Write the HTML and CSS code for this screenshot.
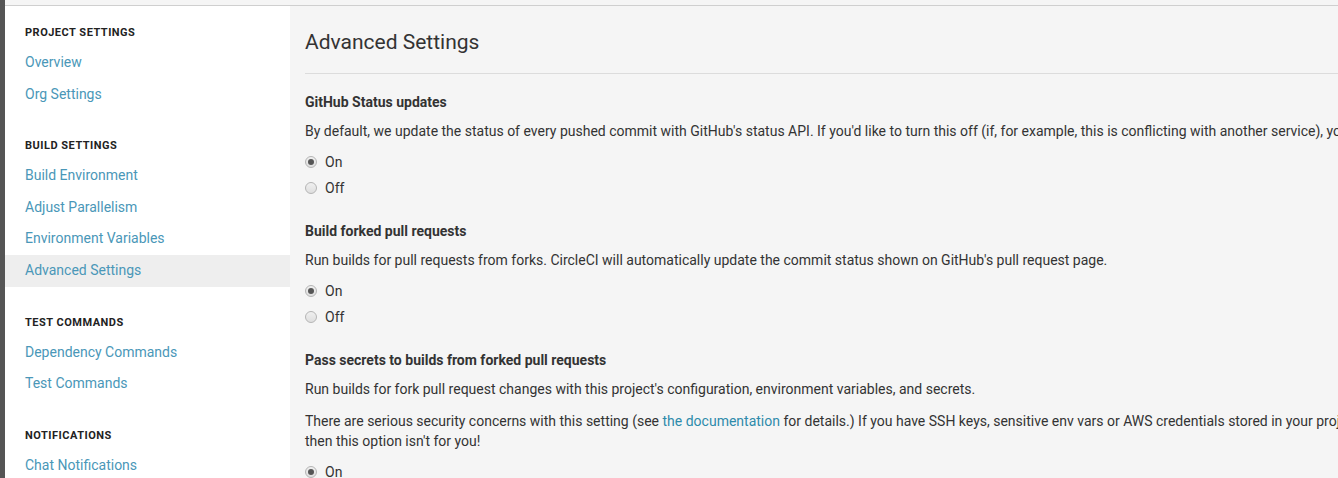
FILE: index.html
```html
<!DOCTYPE html>
<html>
<head>
<meta charset="utf-8">
<link rel="stylesheet" href="styles.css">
</head>
<body>
<div class="app">
  <div class="rail"></div>
  <div class="frame">
    <div class="topbar"></div>
    <div class="body">
      <nav class="sidebar">
        <div class="nav-section">
          <div class="nav-heading">Project Settings</div>
          <a class="nav-link" href="#">Overview</a>
          <a class="nav-link" href="#">Org Settings</a>
        </div>
        <div class="nav-section">
          <div class="nav-heading">Build Settings</div>
          <a class="nav-link" href="#">Build Environment</a>
          <a class="nav-link" href="#">Adjust Parallelism</a>
          <a class="nav-link" href="#">Environment Variables</a>
          <a class="nav-link active" href="#">Advanced Settings</a>
        </div>
        <div class="nav-section">
          <div class="nav-heading">Test Commands</div>
          <a class="nav-link" href="#">Dependency Commands</a>
          <a class="nav-link" href="#">Test Commands</a>
        </div>
        <div class="nav-section">
          <div class="nav-heading">Notifications</div>
          <a class="nav-link" href="#">Chat Notifications</a>
        </div>
      </nav>
      <main class="main">
        <div class="content">
          <h1 class="title">Advanced Settings</h1>
          <section class="setting">
            <h3 class="setting-title">GitHub Status updates</h3>
            <p>By default, we update the status of every pushed commit with GitHub's status API. If you'd like to turn this off (if, for example, this is conflicting with another service), you can do so below.</p>
            <div class="radios">
              <label class="radio"><input type="radio" name="s1" checked><span>On</span></label>
              <label class="radio"><input type="radio" name="s1"><span>Off</span></label>
            </div>
          </section>
          <section class="setting">
            <h3 class="setting-title">Build forked pull requests</h3>
            <p>Run builds for pull requests from forks. CircleCI will automatically update the commit status shown on GitHub's pull request page.</p>
            <div class="radios">
              <label class="radio"><input type="radio" name="s2" checked><span>On</span></label>
              <label class="radio"><input type="radio" name="s2"><span>Off</span></label>
            </div>
          </section>
          <section class="setting">
            <h3 class="setting-title">Pass secrets to builds from forked pull requests</h3>
            <p>Run builds for fork pull request changes with this project's configuration, environment variables, and secrets.</p>
            <p>There are serious security concerns with this setting (see <a href="#">the documentation</a> for details.) If you have SSH keys, sensitive env vars or AWS credentials stored in your project,<br>then this option isn't for you!</p>
            <div class="radios">
              <label class="radio"><input type="radio" name="s3" checked><span>On</span></label>
              <label class="radio"><input type="radio" name="s3"><span>Off</span></label>
            </div>
          </section>
        </div>
      </main>
    </div>
  </div>
</div>
</body>
</html>
```
FILE: styles.css
```css
html, body {
  margin: 0;
  padding: 0;
  height: 100%;
  overflow: hidden;
}
body {
  font-family: Roboto, "Liberation Sans", sans-serif;
  font-size: 14px;
  color: #333;
  background: #f5f5f5;
}
.app {
  display: flex;
  height: 100%;
}
.rail {
  width: 5px;
  flex: none;
  background: #555;
}
.frame {
  flex: 1;
  display: flex;
  flex-direction: column;
  min-width: 0;
}
.topbar {
  height: 5px;
  flex: none;
  background: #f5f5f5;
  border-bottom: 1px solid #cfcfcf;
}
.body {
  flex: 1;
  display: flex;
  min-height: 0;
}
.sidebar {
  width: 285px;
  flex: none;
  background: #fff;
  padding-top: 19px;
}
.nav-section {
  margin-bottom: 28px;
}
.nav-heading {
  padding: 0 20px;
  font-size: 11px;
  font-weight: 700;
  line-height: 16px;
  letter-spacing: 0.5px;
  text-transform: uppercase;
  color: #222;
  margin-bottom: 6px;
}
.nav-link {
  display: block;
  padding: 6px 20px;
  line-height: 19.6px;
  color: #4a97b8;
  text-decoration: none;
}
.nav-link.active {
  background: #eee;
}
.main {
  flex: 1;
  min-width: 0;
  overflow: hidden;
}
.content {
  width: 1500px;
  padding: 21px 0 0 15px;
}
.title {
  margin: 0;
  font-size: 21px;
  font-weight: 400;
  line-height: 30px;
  color: #333;
  padding-bottom: 16px;
  border-bottom: 1px solid #dcdcdc;
  margin-bottom: 18px;
}
.setting {
  margin-bottom: 20px;
}
.setting-title {
  margin: 0 0 9px;
  font-size: 14px;
  font-weight: 700;
  line-height: 20px;
  color: #333;
}
.setting p {
  margin: 0;
  line-height: 20px;
}
.setting p + p {
  margin-top: 12px;
}
.setting a {
  color: #2e8bab;
  text-decoration: none;
}
.radios {
  margin-top: 8px;
}
.radio {
  display: flex;
  align-items: center;
  height: 26px;
  gap: 8px;
}
.radio input {
  appearance: none;
  -webkit-appearance: none;
  margin: 0;
  width: 12px;
  height: 12px;
  border-radius: 50%;
  border: 1px solid #b5b5b5;
  background: linear-gradient(#f0f0f0, #dedede);
  box-sizing: border-box;
  position: relative;
}
.radio input:checked::after {
  content: "";
  position: absolute;
  left: 2px;
  top: 2px;
  width: 6px;
  height: 6px;
  border-radius: 50%;
  background: #555;
}
```
